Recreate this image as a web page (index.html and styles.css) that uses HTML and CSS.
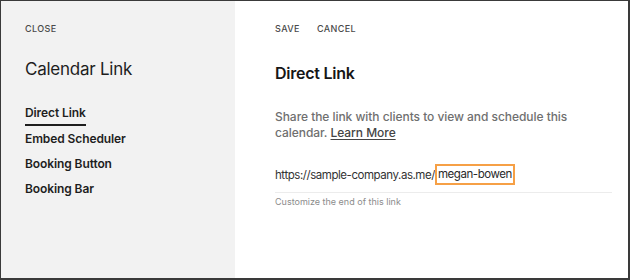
FILE: index.html
```html
<!DOCTYPE html>
<html>
<head>
<meta charset="utf-8">
<link rel="stylesheet" href="styles.css">
</head>
<body>
<div class="frame">
  <aside class="side">
    <div class="close">CLOSE</div>
    <h1 class="title">Calendar Link</h1>
    <nav class="nav">
      <a class="nav-item active">Direct Link</a>
      <a class="nav-item">Embed Scheduler</a>
      <a class="nav-item">Booking Button</a>
      <a class="nav-item">Booking Bar</a>
    </nav>
  </aside>
  <main class="main">
    <div class="actions">
      <span class="action">SAVE</span>
      <span class="action">CANCEL</span>
    </div>
    <h2 class="heading">Direct Link</h2>
    <p class="desc">Share the link with clients to view and schedule this calendar. <a class="learn">Learn More</a></p>
    <div class="field">
      <span class="prefix">https://sample-company.as.me/</span><span class="slug">megan-bowen</span>
    </div>
    <div class="help">Customize the end of this link</div>
  </main>
</div>
</body>
</html>
```
FILE: styles.css
```css
* { box-sizing: border-box; }
html, body { margin: 0; padding: 0; }
body {
  width: 630px;
  height: 280px;
  font-family: Inter, "Liberation Sans", sans-serif;
  background: #fff;
}
.frame {
  display: flex;
  width: 630px;
  height: 280px;
  border: 1px solid #3a3a3a;
  border-right-width: 2px;
  border-bottom-width: 2px;
}
.side {
  width: 234px;
  background: #f2f2f2;
  padding: 22px 0 0 24px;
  display: flex;
  flex-direction: column;
}
.close, .action {
  font-size: 9px;
  letter-spacing: 0.4px;
  color: #4a4a4a;
  font-weight: 500;
  line-height: 11px;
}
.title {
  margin: 25px 0 0 0;
  font-size: 17px;
  line-height: 20px;
  font-weight: 400;
  color: #1e1e1e;
  letter-spacing: -0.25px;
}
.nav {
  display: flex;
  flex-direction: column;
  align-items: flex-start;
  margin-top: 25px;
  gap: 8px;
}
.nav-item {
  font-size: 12px;
  font-weight: 600;
  color: #1e1e1e;
  line-height: 17px;
  letter-spacing: -0.1px;
}
.nav-item.active {
  border-bottom: 2px solid #1e1e1e;
  padding-bottom: 3px;
}
.nav-item.active + .nav-item {
  margin-top: -4px;
}
.main {
  flex: 1;
  padding: 22px 16px 0 40px;
}
.actions {
  display: flex;
  gap: 17px;
}
.heading {
  margin: 29px 0 0 0;
  font-size: 16px;
  line-height: 20px;
  font-weight: 600;
  color: #161616;
  letter-spacing: -0.25px;
}
.desc {
  margin: 26px 0 0 0;
  font-size: 12px;
  line-height: 16px;
  color: #6f6f6f;
  font-weight: 500;
  width: 300px;
  letter-spacing: -0.05px;
}
.learn {
  color: #444;
  text-decoration: underline;
  text-underline-offset: 2px;
}
.field {
  margin-top: 23px;
  display: flex;
  align-items: center;
  font-size: 11.5px;
  letter-spacing: -0.45px;
  color: #333;
  padding-bottom: 7px;
  border-bottom: 1px solid #ececec;
}
.slug {
  border: 2px solid #f6a046;
  padding: 1px 1px 2px 1px;
  margin-left: 0;
  color: #2a2a2a;
}
.help {
  margin-top: 3px;
  font-size: 9px;
  line-height: 11px;
  color: #8c8c8c;
}
```
